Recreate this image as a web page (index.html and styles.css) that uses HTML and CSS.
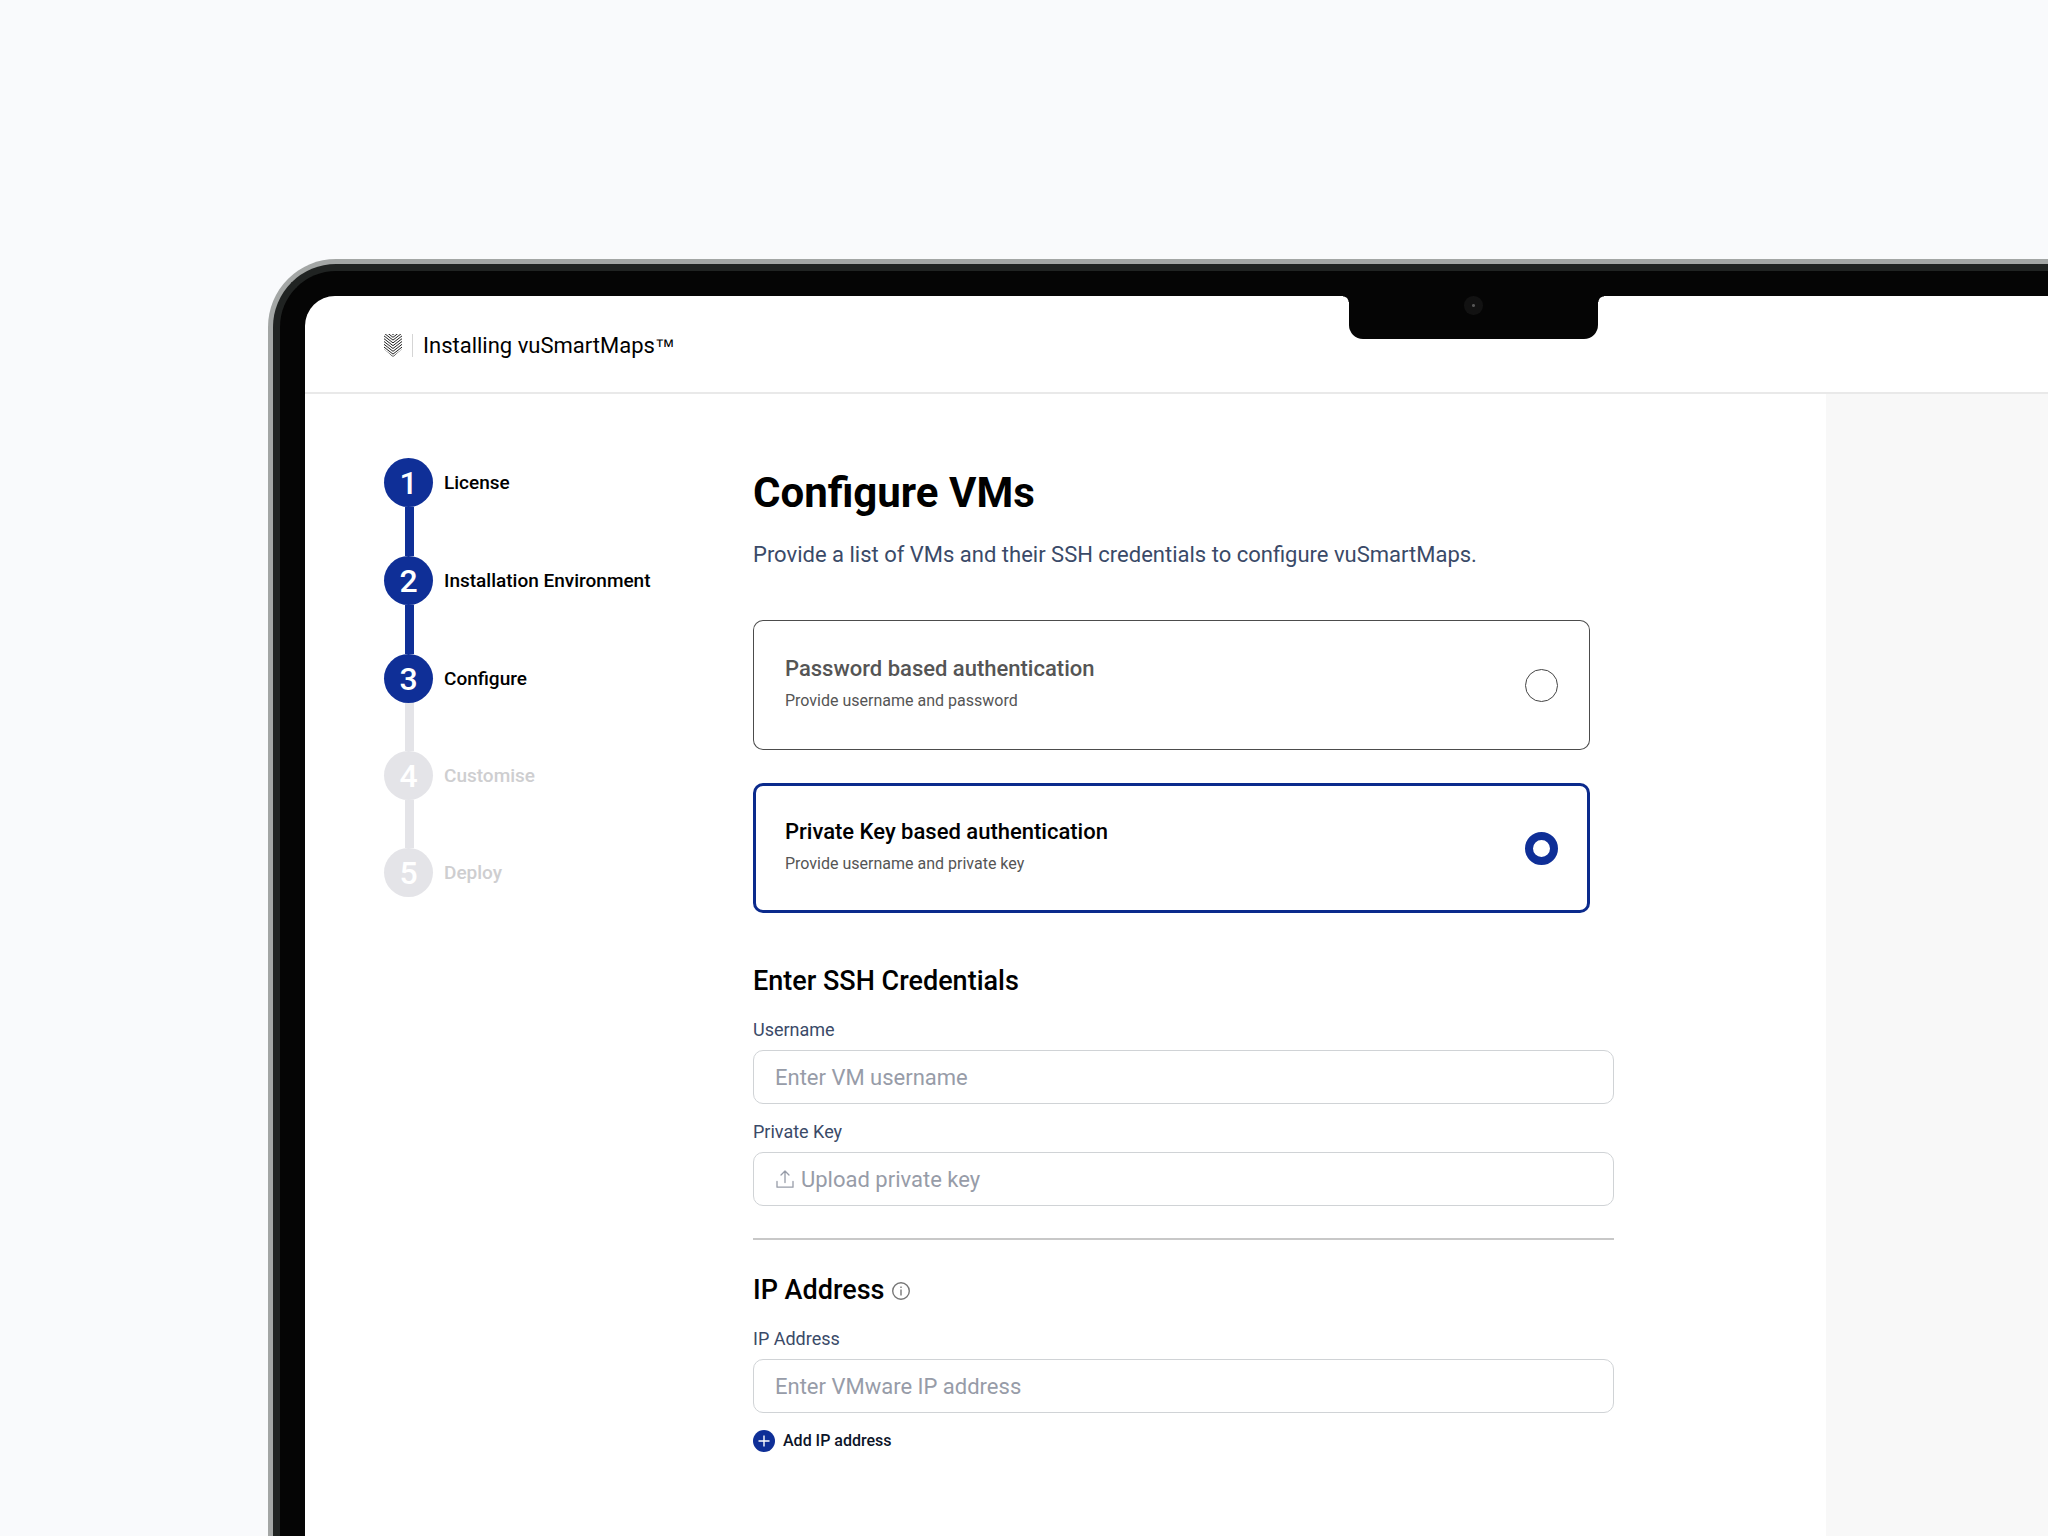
FILE: index.html
```html
<!DOCTYPE html>
<html lang="en">
<head>
    <meta charset="UTF-8">
    <meta name="viewport" content="width=device-width, initial-scale=1.0">
    <title>Installing vuSmartMaps</title>
    <link rel="stylesheet" href="styles.css">
</head>
<body>

    <div class="laptop">
        <div class="bezel">
            <div class="screen">
                <div class="notch"><span class="camera"></span></div>

                <header class="topbar">
                    <svg class="logo" width="18" height="23" viewBox="0 0 18 23" fill="none" stroke="#222" stroke-width="1">
                        <clipPath id="shield"><path d="M0 0H18V15L9 23L0 15Z"/></clipPath>
                        <g clip-path="url(#shield)">
                            <path d="M0 -6.500L9 .5L18 -6.500M0 -3.700L9 3.300L18 -3.700M0 -.9L9 6.100L18 -.9M0 1.900L9 8.900L18 1.900M0 4.700L9 11.700L18 4.700M0 7.500L9 14.500L18 7.500M0 10.300L9 17.300L18 10.300M0 13.100L9 20.100L18 13.100M0 15.600L9 22.600L18 15.600"/>
                        </g>
                    </svg>
                    <span class="divider"></span>
                    <span class="product">Installing vuSmartMaps<span class="tm">™</span></span>
                </header>

                <div class="layout">
                    <!-- Wizard steps -->
                    <nav class="sidebar">
                        <ol class="steps">
                            <li class="step done"><span class="number">1</span><span class="step-name">License</span></li>
                            <li class="step done"><span class="number">2</span><span class="step-name">Installation Environment</span></li>
                            <li class="step current"><span class="number">3</span><span class="step-name">Configure</span></li>
                            <li class="step pending"><span class="number">4</span><span class="step-name">Customise</span></li>
                            <li class="step pending"><span class="number">5</span><span class="step-name">Deploy</span></li>
                        </ol>
                    </nav>

                    <main class="content">
                        <h1>Configure VMs</h1>
                        <p class="intro">Provide a list of VMs and their SSH credentials to configure vuSmartMaps.</p>

                        <form class="form">
                            <div class="options">
                                <label class="option">
                                    <span class="option-text">
                                        <span class="option-title">Password based authentication</span>
                                        <span class="option-hint">Provide username and password</span>
                                    </span>
                                    <input type="radio" name="auth" value="password">
                                </label>
                                <label class="option">
                                    <span class="option-text">
                                        <span class="option-title">Private Key based authentication</span>
                                        <span class="option-hint">Provide username and private key</span>
                                    </span>
                                    <input type="radio" name="auth" value="key" checked>
                                </label>
                            </div>

                            <!-- SSH credentials -->
                            <section class="section">
                                <h2>Enter SSH Credentials</h2>
                                <div class="field">
                                    <label for="username">Username</label>
                                    <input class="box" type="text" id="username" placeholder="Enter VM username">
                                </div>
                                <div class="field">
                                    <label for="privateKey">Private Key</label>
                                    <div class="box upload">
                                        <svg width="20" height="20" viewBox="0 0 20 20" fill="none" stroke="#979ca8" stroke-width="1.3" stroke-linecap="round" stroke-linejoin="round">
                                            <path d="M2 12.500V18.200H18V12.500M10 13.500V2M6 6L10 2L14 6"/>
                                        </svg>
                                        <span>Upload private key</span>
                                        <input class="file" type="file" id="privateKey">
                                    </div>
                                </div>
                            </section>

                            <hr>

                            <!-- IP addresses -->
                            <section class="section">
                                <h2>IP Address
                                    <svg width="20" height="20" viewBox="0 0 20 20" fill="none" stroke="#777" stroke-width="1.4">
                                        <circle cx="10" cy="10" r="8.300"/>
                                        <path d="M10 8.500V14.500M10 5.500V7"/>
                                    </svg>
                                </h2>
                                <div class="field">
                                    <label for="ip">IP Address</label>
                                    <input class="box" type="text" id="ip" placeholder="Enter VMware IP address">
                                </div>
                                <button class="add-btn" type="button">
                                    <svg width="22" height="22" viewBox="0 0 22 22">
                                        <circle cx="11" cy="11" r="11" fill="#0f2f97"/>
                                        <path d="M11 5.500V16.500M5.500 11H16.500" stroke="#fff" stroke-width="1.4"/>
                                    </svg>
                                    Add IP address
                                </button>
                            </section>
                        </form>
                    </main>

                    <aside class="panel"></aside>
                </div>
            </div>
        </div>
    </div>

</body>
</html>
```
FILE: styles.css
```css
* {
    box-sizing: border-box;
}
body {
    margin: 0;
    height: 100vh;
    overflow: hidden;
    display: flex;
    padding: 259px 0 0 268px;
    background: #f9fafc;
    font-family: Roboto, "Liberation Sans", sans-serif;
    color: #000;
}

/* Laptop frame, runs off the right and bottom edges */
.laptop {
    flex: 1;
    display: flex;
    padding: 5px 0 0 5px;
    border-radius: 68px 0 0 0;
    background: #a3a6a5;
}
.bezel {
    flex: 1;
    display: flex;
    border-top: 7px solid #202322;
    border-left: 7px solid #202322;
    padding: 25px 0 0 25px;
    border-radius: 63px 0 0 0;
    background: #050505;
}
.screen {
    position: relative;
    flex: 1;
    display: flex;
    flex-direction: column;
    border-radius: 30px 0 0 0;
    background: #fff;
    overflow: hidden;
}
.notch {
    position: absolute;
    top: 0;
    left: 1044px;
    width: 249px;
    height: 43px;
    border-radius: 0 0 14px 14px;
    background: #050505;
}
.notch::before,
.notch::after {
    content: "";
    position: absolute;
    top: 0;
    width: 6px;
    height: 6px;
}
.notch::before {
    right: 100%;
    background: radial-gradient(circle at 0 100%, transparent 5px, #050505 6px);
}
.notch::after {
    left: 100%;
    background: radial-gradient(circle at 100% 100%, transparent 5px, #050505 6px);
}
.camera {
    display: block;
    width: 19px;
    height: 19px;
    margin: 0 auto;
    border-radius: 50%;
    background: radial-gradient(circle, #555 1px, #121212 2px);
}

.topbar {
    display: flex;
    align-items: center;
    height: 98px;
    padding: 2px 0 0 79px;
    border-bottom: 2px solid #e9e9e9;
}
.divider {
    width: 1px;
    height: 23px;
    margin: 0 10px;
    background: #d5d5d5;
}
.product {
    font-size: 22px;
}
.tm {
    font-family: "Liberation Sans", sans-serif;
    font-size: 20px;
}

.layout {
    flex: 1;
    display: flex;
}
.sidebar {
    width: 448px;
    padding: 64px 0 0 79px;
}
.steps {
    list-style: none;
    margin: 0;
    padding: 0;
}
.step {
    display: grid;
    grid-template-columns: 49px 1fr;
    align-items: center;
    column-gap: 11px;
    font-size: 19px;
    font-weight: 500;
}
.number {
    height: 49px;
    border-radius: 50%;
    background: #0f2f97;
    color: #fff;
    font-size: 32px;
    line-height: 50px;
    text-align: center;
}
.step:not(:last-child)::after {
    content: "";
    width: 9px;
    height: 49px;
    margin-left: 21px;
    background: #0f2f97;
}
.step.current:not(:last-child)::after,
.step.pending:not(:last-child)::after {
    height: 48px;
    background: #e4e4e8;
}
.pending .number {
    background: #e4e4e8;
}
.pending .step-name {
    color: #ceced0;
}

.content {
    flex: 1;
    padding-top: 74px;
}
h1 {
    margin: 0;
    font-size: 42px;
    line-height: 50px;
    font-weight: 700;
}
.intro {
    margin: 24px 0 52px;
    font-size: 22px;
    line-height: 26px;
    color: #3a4a68;
}
.form {
    max-width: 861px;
}
.options {
    display: grid;
    gap: 33px;
    margin-right: 24px;
}
.option {
    display: flex;
    align-items: center;
    justify-content: space-between;
    height: 130px;
    padding: 0 32px;
    border-radius: 10px;
    box-shadow: inset 0 0 0 1px #4c4c4c;
    cursor: pointer;
}
.option:has(:checked) {
    box-shadow: inset 0 0 0 3px #0b2a8c;
}
.option-text {
    display: grid;
    gap: 9px;
    padding-bottom: 4px;
}
.option-title {
    font-size: 22px;
    line-height: 26px;
    font-weight: 500;
    color: #555;
}
.option:has(:checked) .option-title {
    color: #000;
}
.option-hint {
    font-size: 16px;
    line-height: 20px;
    color: #555;
}
.option input {
    appearance: none;
    width: 33px;
    height: 33px;
    margin: 0;
    border: 1px solid #444;
    border-radius: 50%;
}
.option input:checked {
    border: 8px solid #0f2f97;
}

.options + .section {
    margin-top: 52px;
}
h2 {
    display: flex;
    align-items: center;
    gap: 7px;
    margin: 0 0 21px;
    font-size: 27px;
    line-height: 33px;
    font-weight: 500;
}
.field {
    display: grid;
    gap: 10px;
    margin-bottom: 17px;
}
.field label {
    font-size: 18px;
    line-height: 21px;
    color: #3a4a68;
}
.box {
    width: 100%;
    height: 54px;
    padding: 0 21px;
    border: 1px solid #d0d3d6;
    border-radius: 10px;
    background: #fff;
    font-family: inherit;
    font-size: 22px;
}
.box::placeholder {
    color: #979ca8;
    opacity: 1;
}
.upload {
    position: relative;
    display: flex;
    align-items: center;
    gap: 6px;
    color: #979ca8;
}
.file {
    position: absolute;
    inset: 0;
    width: 100%;
    opacity: 0;
    cursor: pointer;
}
hr {
    height: 2px;
    margin: 32px 0 34px;
    border: none;
    background: #c8c8c8;
}
.section .field:last-child {
    margin-bottom: 0;
}
.add-btn {
    display: flex;
    align-items: center;
    gap: 8px;
    padding: 0;
    border: none;
    background: none;
    font-family: inherit;
    font-size: 16px;
    font-weight: 500;
    line-height: 20px;
    color: #0c1428;
    cursor: pointer;
}

.panel {
    width: 222px;
    background: #f8f8f8;
}
```
